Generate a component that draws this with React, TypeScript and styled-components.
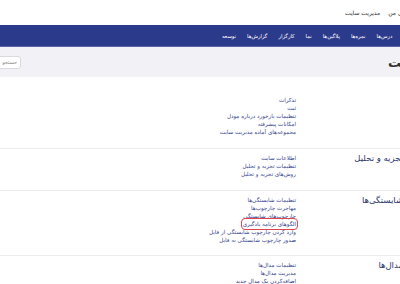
import React from "react";
import styled, { createGlobalStyle } from "styled-components";

const Global = createGlobalStyle`
  html, body { margin: 0; padding: 0; background: #fff; overflow: hidden; }
  body { width: 400px; height: 284px; font-family: "DejaVu Sans", sans-serif; }
`;

const Page = styled.div`
  direction: rtl;
  width: 520px;
  margin-left: -30px;
  font-family: "DejaVu Sans", "Noto Sans", sans-serif;
`;

const TopBar = styled.div`
  height: 25px;
  display: flex;
  align-items: center;
  justify-content: flex-end;
  gap: 8px;
  padding-left: 375px;
  background: #fff;
  font-size: 6px;
  color: #333;
  white-space: nowrap;
`;

const NavBar = styled.nav`
  height: 22px;
  display: flex;
  align-items: center;
  justify-content: flex-end;
  gap: 11px;
  padding-left: 252px;
  background: #2c3a8b;
  border-bottom: 1px solid #5a66a8;
  box-sizing: border-box;
  white-space: nowrap;
`;

const NavItem = styled.span`
  color: #fff;
  font-size: 5.3px;
`;

const Header = styled.header`
  height: 30px;
  display: flex;
  align-items: center;
  justify-content: space-between;
  padding: 0 14px 0 8px;
  background: #f2f2f6;
`;

const Title = styled.h1`
  margin: 0;
  font-size: 13px;
  font-weight: bold;
  color: #333;
  white-space: nowrap;
`;

const Search = styled.input`
  width: 43px;
  height: 13px;
  box-sizing: border-box;
  border: 1px solid #d9d9de;
  border-radius: 3px;
  background: #fff;
  font-family: inherit;
  font-size: 5px;
  padding: 0 3px;
  direction: rtl;
  &::placeholder { color: #888; }
`;

const Section = styled.section<{ $top?: number; $bottom?: number }>`
  display: flex;
  gap: 12px;
  padding: ${(p) => p.$top ?? 5}px 87px ${(p) => p.$bottom ?? 12}px 0;
  border-top: 1px solid #ededed;
  &:first-of-type { border-top: none; }
`;

const SectionTitle = styled.h2`
  margin: 0;
  width: 95px;
  flex: none;
  font-size: 8.5px;
  font-weight: normal;
  color: #2d366c;
  line-height: 8px;
  white-space: nowrap;
`;

const Links = styled.ul`
  list-style: none;
  margin: 0;
  padding: 0;
  display: flex;
  flex-direction: column;
  align-items: flex-start;
`;

const LinkItem = styled.li<{ $hl?: boolean }>`
  font-size: 5.6px;
  line-height: 8px;
  color: #34418d;
  white-space: nowrap;
  border-radius: 2px;
  outline: ${(p) => (p.$hl ? "1px solid #e0444f" : "none")};
  outline-offset: 1px;
`;

const sections: { title: string; top: number; bottom: number; links: string[] }[] = [
  {
    title: "",
    top: 19,
    bottom: 12,
    links: [
      "تذکرات",
      "ثبت",
      "تنظیمات بازخورد درباره مودل",
      "امکانات پیشرفته",
      "مجموعه‌های آماده مدیریت سایت",
    ],
  },
  {
    title: "تجزیه و تحلیل",
    top: 5,
    bottom: 12,
    links: ["اطلاعات سایت", "تنظیمات تجزیه و تحلیل", "روش‌های تجزیه و تحلیل"],
  },
  {
    title: "شایستگی‌ها",
    top: 5,
    bottom: 11,
    links: [
      "تنظیمات شایستگی‌ها",
      "مهاجرت چارچوب‌ها",
      "چارچوب‌های شایستگی",
      "الگوهای برنامه یادگیری",
      "وارد کردن چارچوب شایستگی از فایل",
      "صدور چارچوب شایستگی به فایل",
    ],
  },
  {
    title: "مدال‌ها",
    top: 5,
    bottom: 12,
    links: ["تنظیمات مدال‌ها", "مدیریت مدال‌ها", "اضافه‌کردن یک مدال جدید"],
  },
];

export default function App() {
  return (
    <>
      <Global />
      <Page>
        <TopBar>
          <span>خانه</span>
          <span>داشبورد</span>
          <span>درس‌های من</span>
          <span>مدیریت سایت</span>
        </TopBar>
        <NavBar>
          {["عمومی", "کاربران", "درس‌ها", "نمره‌ها", "پلاگین‌ها", "نما", "کارگزار", "گزارش‌ها", "توسعه"].map((t) => (
            <NavItem key={t}>{t}</NavItem>
          ))}
        </NavBar>
        <Header>
          <Title>مدیریت سایت</Title>
          <Search placeholder="جستجو" />
        </Header>
        {sections.map((s, i) => (
          <Section key={i} $top={s.top} $bottom={s.bottom}>
            <SectionTitle>{s.title}</SectionTitle>
            <Links>
              {s.links.map((l) => (
                <LinkItem key={l} $hl={l === "الگوهای برنامه یادگیری"}>
                  {l}
                </LinkItem>
              ))}
            </Links>
          </Section>
        ))}
      </Page>
    </>
  );
}
